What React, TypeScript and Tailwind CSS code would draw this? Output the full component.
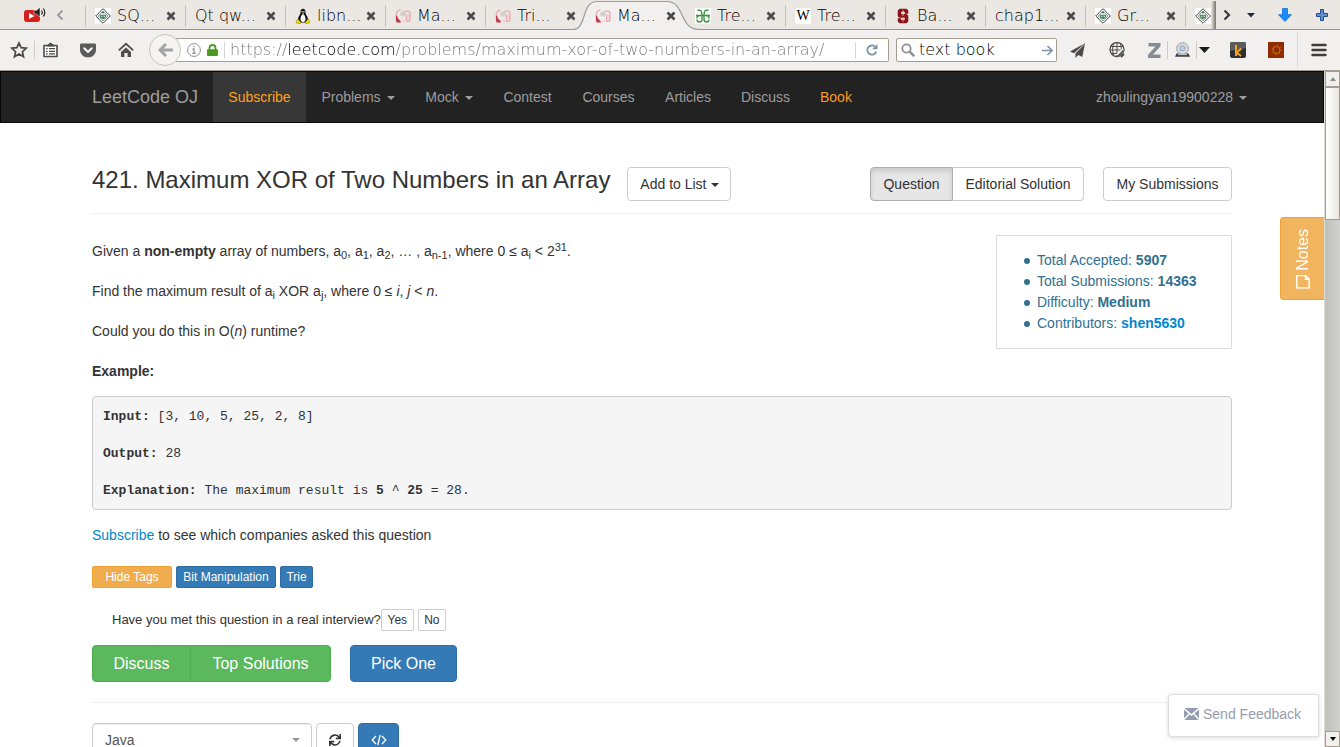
import type { ReactNode } from "react";

const caret = "ml-1 inline-block border-x-4 border-t-4 border-x-transparent border-t-current align-middle";
const navCaret = "ml-[6px] inline-block border-x-4 border-t-4 border-x-transparent border-t-current align-middle";

function CloseMark() {
  return (
    <svg width="10" height="10" viewBox="0 0 10 10" aria-hidden="true">
      <path d="M1.500 1.500l7 7M8.500 1.500l-7 7" stroke="#4a4a4a" strokeWidth="2.600" />
    </svg>
  );
}

function DiamondIcon() {
  return (
    <svg width="16" height="16" viewBox="0 0 16 16">
      <rect width="16" height="16" fill="#fff" />
      <path d="M8 .7L15.300 8 8 15.300.7 8z" fill="#fff" stroke="#3c4440" strokeWidth="1" />
      <path d="M8 3l5 5-5 5-5-5z" fill="#e6ede8" stroke="#8a968e" strokeWidth=".8" />
      <path d="M4.600 6.300l2 .6h2.800l2-.6-.5 3.200L8 11.600 5.100 9.500z" fill="#4d8a63" />
      <path d="M6.300 8.400h1M8.800 8.400h1" stroke="#fff" />
      <path d="M8 3.200v2.400M6.800 4.600h2.400" stroke="#3f5c4a" strokeWidth=".8" />
    </svg>
  );
}

function TuxIcon() {
  return (
    <svg width="16" height="16" viewBox="0 0 16 16">
      <path d="M8 .8c-1.700 0-2.600 1.300-2.500 3.200.1 1.500-.3 2.200-1.100 3.500C3.500 9 3 10.300 3 12l2 2.500h6l2-2.500c0-1.700-.5-3-1.400-4.500-.8-1.300-1.200-2-1.100-3.500C10.600 2.100 9.700.8 8 .8z" fill="#111" />
      <path d="M8 6.300c-1.300 0-2.500 2.600-2.500 5 0 1.500 1 2.700 2.500 2.700s2.500-1.200 2.500-2.700c0-2.400-1.200-5-2.500-5z" fill="#fff" />
      <path d="M6.500 3h1v1.300h-1zM8.500 3h1v1.300h-1z" fill="#fff" />
      <path d="M6.600 5L8 4.400 9.400 5 8 6z" fill="#f5b800" />
      <path d="M3 11l3 3.800-1 .9-4-.9.600-2.200zM13 11l-3 3.800 1 .9 4-.9-.6-2.200z" fill="#f7e000" stroke="#5a5000" strokeWidth=".4" />
    </svg>
  );
}

function LeetIcon() {
  return (
    <svg width="16" height="16" viewBox="0 0 16 16" fill="none">
      <path d="M1 7c1.600.5 1.200 2.500 2.200 3.800 1 1.200 2.600 1.800 2.800 3.700H1.500C.8 12 .7 9.500 1 7z" fill="#c4384d" />
      <path d="M1.200 7.500C1.200 4 2.800 2.300 5.500 1.800" stroke="#eab3ba" strokeWidth="1.600" />
      <path d="M5 5l2.500-1.800 3 .6.6 2.700-2 2-3.300-.3z" fill="#d3cfcb" />
      <path d="M9.500 3.200h3.800c1.300 0 1.700.8 1.700 2.200v6c0 1.300-.6 2-2 2h-1.500V6.800" stroke="#e8a8b1" strokeWidth="1.300" />
      <path d="M13.200 5.500v5.500M7 12.300l3 1.300" stroke="#efc6cb" />
    </svg>
  );
}

function GfgIcon() {
  return (
    <svg width="16" height="16" viewBox="0 0 16 16">
      <rect width="16" height="16" fill="#fff" />
      <g fill="none" stroke="#3d9440" strokeWidth="1.400">
        <path d="M2.300 2.200h2.200C6.500 2.200 7 4 7 7.500v3.800c0 1.800-1 2.700-2.500 2.700S2 13 2 11.500M1 7.500h14M4.500 7.500C3 7.500 2 9 2 10.500" />
        <path d="M13.700 2.200h-2.200C9.500 2.200 9 4 9 7.500v3.800c0 1.800 1 2.700 2.500 2.700S14 13 14 11.500M11.500 7.500c1.500 0 2.500 1.500 2.500 3" />
      </g>
    </svg>
  );
}

function WikiIcon() {
  return (
    <span className="grid size-4 place-items-center overflow-hidden rounded-xs bg-white font-['Liberation_Serif',serif] text-sm font-normal leading-4 text-black">
      W
    </span>
  );
}

function StanfordIcon() {
  return (
    <svg width="16" height="16" viewBox="0 0 16 16">
      <path d="M4.500.8h7L13.300 2.500v3.300H9.800V4H6.300v2h5.200l1.800 1.700v5.800l-1.800 1.700h-7l-1.800-1.700v-3.200h3.500V12h3.500V9.800H4.500L2.700 8.200V2.500z" fill="#8c1515" />
      <path d="M8 1.500l1.200 2.500H6.800zM8 5l1.400 2.600H6.600zM7.500 9h1v5h-1z" fill="#c98f8f" />
    </svg>
  );
}

type TabInfo = { title: string; icon?: ReactNode; active?: boolean; bare?: boolean };

const tabs: TabInfo[] = [
  { title: "SQ...", icon: <DiamondIcon /> },
  { title: "Qt qw..." },
  { title: "libn...", icon: <TuxIcon /> },
  { title: "Ma...", icon: <LeetIcon /> },
  { title: "Tri...", icon: <LeetIcon /> },
  { title: "Ma...", icon: <LeetIcon />, active: true },
  { title: "Tre...", icon: <GfgIcon />, bare: true },
  { title: "Tre...", icon: <WikiIcon /> },
  { title: "Ba...", icon: <StanfordIcon /> },
  { title: "chap1..." },
  { title: "Gr...", icon: <DiamondIcon /> },
];

function Tab({ title, icon, active, bare }: TabInfo) {
  return (
    <div className="relative flex h-[30px] w-[100px] shrink-0 items-center pt-[2px]">
      {active ? (
        <svg className="absolute -left-3 top-0" width="126" height="30" viewBox="0 0 126 30">
          <path d="M0 29.500C14 29.500 8 1.500 24 1.500H94C112 1.500 106 29.500 126 29.500V30H0z" fill="#f2f0ee" />
          <path d="M0 29.500C14 29.500 8 1.500 24 1.500H94C112 1.500 106 29.500 126 29.500" fill="none" stroke="#9a9c9e" strokeWidth="1.200" />
        </svg>
      ) : (
        <span className={bare ? "h-[22px] w-px" : "h-[22px] w-px bg-[#c5c1bb]"} />
      )}
      <button type="button" className={active ? "relative ml-[10px] flex min-w-0 flex-1 items-center gap-[6px]" : "relative ml-[9px] flex min-w-0 flex-1 items-center gap-[6px]"}>
        {icon}
        <span className="whitespace-nowrap">{title}</span>
      </button>
      <button type="button" aria-label="Close tab" className="relative mr-[9px]">
        <CloseMark />
      </button>
    </div>
  );
}

function TabStrip() {
  return (
    <div className="flex h-[30px] items-center bg-[linear-gradient(#ebe8e4_0_29px,#95938f_29px)] text-base">
      <button type="button" aria-label="Pinned video tab" className="ml-6 w-[22px]">
        <svg width="22" height="18" viewBox="0 0 22 18">
          <rect y="4" width="16" height="12" rx="3" fill="#d4201f" />
          <path d="M5 7l5.500 3L5 13z" fill="#fff" />
          <path d="M10 4.500h2.500L16 1.200v10L12.500 8H10z" fill="#222" stroke="#fff" strokeWidth=".5" />
          <path d="M17.500 4.500q1.500 2 0 4M19.300 2.500q3 4 0 8" fill="none" stroke="#222" strokeWidth="1.200" />
        </svg>
      </button>
      <button type="button" aria-label="Scroll tabs left" className="ml-[10px] mr-[21px]">
        <svg width="8" height="12" viewBox="0 0 8 12">
          <path d="M6.500 1.500L2 6l4.500 4.500" fill="none" stroke="#999" strokeWidth="1.800" />
        </svg>
      </button>
      <div className="flex min-w-0 flex-1 overflow-hidden">
        {tabs.map((t, i) => (
          <Tab key={i} {...t} />
        ))}
        <div className="flex h-[30px] shrink-0 items-center pt-[2px]">
          <span className="h-[22px] w-px bg-[#c5c1bb]" />
          <span className="ml-[9px]">
            <DiamondIcon />
          </span>
        </div>
      </div>
      <span className="h-[28px] w-[5px] bg-linear-to-r from-transparent to-[#77736d]" />
      <div className="flex w-[124px] items-center">
        <button type="button" aria-label="Scroll tabs right" className="ml-[7px]">
          <svg width="8" height="12" viewBox="0 0 8 12">
            <path d="M1.500 1.500L6 6l-4.500 4.500" fill="none" stroke="#3a3a3a" strokeWidth="2.200" />
          </svg>
        </button>
        <button type="button" aria-label="List all tabs" className="ml-[16px]">
          <svg width="8" height="5" viewBox="0 0 8 5">
            <path d="M0 0h8L4 4.500z" fill="#222b36" />
          </svg>
        </button>
        <button type="button" aria-label="Downloads" className="ml-[23px]">
          <svg width="14" height="14" viewBox="0 0 14 14">
            <path d="M4.500.5h5v6.200h4L7 13.500.5 6.700h4z" fill="#1a8cff" stroke="#1670d6" strokeWidth=".8" />
          </svg>
        </button>
        <button type="button" aria-label="New tab" className="ml-6">
          <svg width="12" height="12" viewBox="0 0 12 12">
            <path d="M4.500.5h3v4h4v3h-4v4h-3v-4h-4v-3h4z" fill="#6593cf" stroke="#1f4b8a" />
          </svg>
        </button>
      </div>
    </div>
  );
}

function Toolbar() {
  return (
    <div className="flex h-[41px] items-center border-b border-[#a59d90] bg-[#f2f0ee]">
      <button type="button" aria-label="Bookmark" className="ml-[10px]">
        <svg width="18" height="18" viewBox="0 0 18 18">
          <path d="M9 2l2.100 4.700 5.100.5-3.800 3.500 1.100 5L9 13.100l-4.500 2.600 1.100-5L1.800 7.200l5.100-.5z" fill="none" stroke="#4a4a4a" strokeWidth="1.700" />
        </svg>
      </button>
      <span className="ml-[6px] h-[18px] w-px bg-[#cfcbc5]" />
      <button type="button" aria-label="Bookmarks list" className="ml-[8px]">
        <svg width="15" height="16" viewBox="0 0 15 16">
          <path d="M1 3.500h13v11H1z" fill="#fff" stroke="#4a4a4a" strokeWidth="1.600" strokeLinejoin="round" />
          <path d="M3.500 4.500c0-2 1.500-1.500 2-2.500L7.500.5 9.500 2c.5 1 2 .5 2 2.500z" fill="#4a4a4a" />
          <path d="M3 6.700h1.600M3 9.300h1.600M3 11.900h1.600M6 6.700h6M6 9.300h6M6 11.900h6" stroke="#4a4a4a" strokeWidth="1.300" />
        </svg>
      </button>
      <button type="button" aria-label="Pocket" className="ml-[22px]">
        <svg width="16" height="15" viewBox="0 0 16 15">
          <path d="M1.500.5h13c.9 0 1.500.6 1.500 1.500v4.500c0 4.500-3.500 8-8 8s-8-3.500-8-8V2C0 1.100.6.500 1.500.500z" fill="#5a5a5a" />
          <path d="M4.200 5.200L8 8.800l3.800-3.600" fill="none" stroke="#fff" strokeWidth="2" strokeLinecap="round" />
        </svg>
      </button>
      <button type="button" aria-label="Home" className="ml-[22px]">
        <svg width="16" height="16" viewBox="0 0 16 16">
          <path d="M.8 8.300L8 1.800l7.200 6.500" fill="none" stroke="#4f4f4f" strokeWidth="1.800" />
          <path d="M3 10l5-4.500 5 4.500v5H9.600v-4H6.400v4H3z" fill="#4f4f4f" />
        </svg>
      </button>
      <button type="button" aria-label="Back" className="relative z-10 ml-[15px] grid size-8 place-items-center rounded-full border border-[#c9c4b8] bg-[#f5f4f1]">
        <svg width="15" height="14" viewBox="0 0 15 14">
          <path d="M8 1L2 7l6 6M2.500 7H15" fill="none" stroke="#a3a3a3" strokeWidth="3" />
        </svg>
      </button>
      <div className="-ml-[6px] flex h-6 min-w-0 flex-1 items-center rounded-xs border border-[#a59d90] bg-white pl-[11px]">
        <svg width="14" height="14" viewBox="0 0 14 14" fill="none" stroke="#8d8d8d">
          <circle cx="7" cy="7" r="6.400" />
          <path d="M5.500 6H7v4M5.300 10.300h3.500M6.200 3.700h1.300" strokeWidth="1.300" />
        </svg>
        <svg className="ml-[6px]" width="11" height="12" viewBox="0 0 11 12">
          <path d="M2.500 6V4a3 3 0 0 1 6 0v2" fill="none" stroke="#4a9a22" strokeWidth="1.800" />
          <rect y="5.200" width="11" height="6.800" rx="1" fill="#4a9a22" />
        </svg>
        <span className="ml-[6px] mr-[5px] h-4 w-px bg-[#d5d5d5]" />
        <input
          aria-label="Address"
          defaultValue="https://leetcode.com/problems/maximum-xor-of-two-numbers-in-an-array/"
          className="min-w-0 flex-1 bg-[linear-gradient(90deg,#777_57px,#000_57px_165px,#777_165px)] bg-clip-text text-base leading-5 text-transparent outline-none"
        />
        <span className="h-4 w-px bg-[#d5d5d5]" />
        <button type="button" aria-label="Reload" className="mx-[10px]">
          <svg width="12" height="12" viewBox="0 0 12 12">
            <path d="M10.300 7.600A4.600 4.600 0 1 1 9 2.600" fill="none" stroke="#7f93a8" strokeWidth="1.800" />
            <path d="M11.500 0v5.300H6.200z" fill="#7f93a8" />
          </svg>
        </button>
      </div>
      <div className="ml-[7px] flex h-6 w-[161px] items-center rounded-xs border border-[#a59d90] bg-white pl-1 pr-[3px]">
        <svg width="14" height="14" viewBox="0 0 14 14" fill="none" stroke="#8f8f8f">
          <circle cx="5.500" cy="5.500" r="4.200" strokeWidth="1.800" />
          <path d="M8.700 8.700l4.500 4.500" strokeWidth="2.500" />
        </svg>
        <input aria-label="Search" defaultValue="text book" className="ml-1 w-full min-w-0 flex-1 text-base leading-5 text-black outline-none" />
        <svg width="11" height="11" viewBox="0 0 11 11" fill="none" stroke="#7f93a8" strokeWidth="1.600">
          <path d="M0 5.500h10M5.500 1L10 5.500 5.500 10" />
        </svg>
      </div>
      <div className="flex h-full w-[283px] items-center">
        <button type="button" aria-label="Share" className="ml-[13px]">
          <svg width="15" height="15" viewBox="0 0 15 15">
            <path d="M15 .3L0 8.500l4 1.700zM15 .3L5.500 10.500V15l2.800-3 4 2z" fill="#4a4a4a" />
            <path d="M14 1.500L4.800 10.300" stroke="#c8c8c8" strokeWidth=".8" />
          </svg>
        </button>
        <button type="button" aria-label="Web tools" className="ml-6">
          <svg width="16" height="16" viewBox="0 0 16 16" fill="none" stroke="#4d4d4d">
            <circle cx="8" cy="7.500" r="7" strokeWidth="1.300" />
            <path d="M2 4.500h12M1 8h14M2 11.500h9M8 .5v14M4.500 1.500q-2 6 0 12M11.500 1.500q2 6 0 10" strokeWidth="1" />
            <path d="M14.500 7.500L8 14" stroke="#f2f0ee" strokeWidth="3.500" />
            <path d="M15 8l-5.500 5.800-2 .7M12 15l3-3" strokeWidth="1.800" />
          </svg>
        </button>
        <button type="button" aria-label="Zotero" className="ml-[23px]">
          <svg width="13" height="15" viewBox="0 0 13 15">
            <path d="M.5 0h12v3.300L5 11.500h7.500V15H0v-3.300l7.500-8.200h-7z" fill="#868c93" />
          </svg>
        </button>
        <span className="ml-[6px] h-[18px] w-px bg-[#cfcbc5]" />
        <button type="button" aria-label="Capture" className="ml-[7px]">
          <svg width="15" height="16" viewBox="0 0 15 16">
            <path d="M0 14.800L1.500 11.500h12l1.500 3.300z" fill="#3f3f3f" />
            <circle cx="7.500" cy="6.500" r="5.800" fill="#dcdcdc" stroke="#9c9c9c" />
            <circle cx="7.500" cy="6.300" r="2.500" fill="#b9d4f5" stroke="#8ba3c5" />
            <path d="M3 12.600h9" stroke="#ccc" />
          </svg>
        </button>
        <span className="ml-[6px] h-[18px] w-px bg-[#cfcbc5]" />
        <button type="button" aria-label="Capture options" className="ml-[2px]">
          <svg width="11" height="6" viewBox="0 0 11 6">
            <path d="M0 0h11L5.500 6z" fill="#1a1a1a" />
          </svg>
        </button>
        <button type="button" aria-label="Shortcut" className="ml-5">
          <svg width="16" height="16" viewBox="0 0 16 16">
            <rect width="16" height="16" rx="2" fill="#2e2e2e" />
            <path d="M0 2q0-2 2-2h12q2 0 2 2v4L0 9z" fill="#5c5c5c" />
            <path d="M6 3v11M11.500 6.500L6.500 10.500l4.500 3.500" fill="none" stroke="#f5a316" strokeWidth="2" />
          </svg>
        </button>
        <button type="button" aria-label="Extension" className="ml-[22px]">
          <svg width="16" height="16" viewBox="0 0 16 16">
            <rect width="16" height="16" fill="#8f2c00" />
            <circle cx="8.500" cy="8" r="3.500" fill="none" stroke="#c9761a" strokeWidth="1" />
            <circle cx="8.500" cy="8" r="4.500" fill="none" stroke="#c9761a" strokeWidth="1" strokeDasharray="1.200 2.300" />
          </svg>
        </button>
        <span className="ml-[13px] h-9 w-px bg-[#dcd8d2]" />
        <button type="button" aria-label="Menu" className="ml-[13px]">
          <svg width="16" height="14" viewBox="0 0 16 14">
            <path d="M1.500 2h13M1.500 7h13M1.500 12h13" stroke="#3e3e3e" strokeWidth="2.400" strokeLinecap="round" />
          </svg>
        </button>
      </div>
    </div>
  );
}

const links = [
  { text: "Problems", menu: true, width: "w-[104px]" },
  { text: "Mock", menu: true, width: "w-[78px]" },
  { text: "Contest", width: "w-[79px]" },
  { text: "Courses", width: "w-[83px]" },
  { text: "Articles", width: "w-[76px]" },
  { text: "Discuss", width: "w-[79px]" },
];

function SiteNav() {
  return (
    <nav className="border border-[#080808] bg-[#222] text-sm leading-5 text-[#9d9d9d]">
      <div className="mx-auto flex max-w-[1170px] items-center pl-[15px]">
        <a href="#home" className="mr-[15px] w-[106px] whitespace-nowrap text-lg leading-5">LeetCode OJ</a>
        <a href="#subscribe" className="w-[93px] bg-[#373737] py-[15px] text-center text-[#ffa116]">Subscribe</a>
        {links.map((l) => (
          <a key={l.text} href={"#" + l.text.toLowerCase()} className={"whitespace-nowrap py-[15px] text-center " + l.width}>
            {l.text}
            {l.menu && <span className={navCaret} />}
          </a>
        ))}
        <a href="#book" className="px-[15px] py-[15px] text-[#f89c1c]">Book</a>
        <a href="#account" className="ml-auto py-[15px]">
          zhoulingyan19900228
          <span className={navCaret} />
        </a>
      </div>
    </nav>
  );
}

const outline = "border border-[#ccc] bg-white text-[#333] whitespace-nowrap";
const bullet = "flex items-center gap-[7px] before:size-[6px] before:rounded-full before:bg-[#31708f]";

function Problem() {
  return (
    <main className="mx-auto max-w-[1170px] px-[15px] pt-11 text-sm leading-5 text-[#333]">
      <div className="flex items-start border-b border-[#eee] pb-3">
        <h1 className="text-2xl leading-[26px]">421. Maximum XOR of Two Numbers in an Array</h1>
        <button type="button" className={"ml-[17px] h-[34px] w-[104px] rounded-sm " + outline}>
          Add to List
          <span className={caret} />
        </button>
        <div className="ml-auto flex">
          <button type="button" className="h-[34px] w-[83px] rounded-l-sm border border-[#adadad] bg-[#e6e6e6] shadow-[inset_0_3px_5px_rgba(0,0,0,0.125)]">Question</button>
          <button type="button" className={"-ml-px h-[34px] w-[132px] rounded-r-sm border-l-[#adadad] " + outline}>Editorial Solution</button>
        </div>
        <button type="button" className={"ml-[19px] h-[34px] w-[129px] rounded-sm " + outline}>My Submissions</button>
      </div>

      <div className="mt-[21px] flex items-start justify-between">
        <div className="flex flex-col gap-5 pt-[6px] [&_sub]:text-[11px] [&_sup]:text-[11px]">
          <p>
            Given a <b>non-empty</b> array of numbers, a<sub>0</sub>, a<sub>1</sub>, a<sub>2</sub>, … , a<sub>n-1</sub>, where 0 ≤ a<sub>i</sub> &lt; 2<sup>31</sup>.
          </p>
          <p>
            Find the maximum result of a<sub>i</sub> XOR a<sub>j</sub>, where 0 ≤ <i>i</i>, <i>j</i> &lt; <i>n</i>.
          </p>
          <p>
            Could you do this in O(<i>n</i>) runtime?
          </p>
          <p>
            <b>Example:</b>
          </p>
        </div>
        <ul className="h-[114px] w-[236px] border border-[#ddd] pl-[27px] pt-[14px] leading-[21px] text-[#31708f]">
          <li className={bullet}><span>Total Accepted: <b>5907</b></span></li>
          <li className={bullet}><span>Total Submissions: <b>14363</b></span></li>
          <li className={bullet}><span>Difficulty: <b>Medium</b></span></li>
          <li className={bullet}><span>Contributors: <a href="#shen5630" className="font-bold text-[#0088cc]">shen5630</a></span></li>
        </ul>
      </div>

      <pre className="mt-[15px] rounded-sm border border-[#ccc] bg-[#f5f5f5] px-[10px] pt-px font-['Liberation_Mono',monospace] text-[13px] leading-[37px]">
        <b>Input:</b>{" [3, 10, 5, 25, 2, 8]\n"}
        <b>Output:</b>{" 28\n"}
        <b>Explanation:</b>{" The maximum result is "}<b>5</b>{" ^ "}<b>25</b>{" = 28."}
      </pre>

      <p className="mt-[15px]">
        <a href="#subscribe" className="text-[#0088cc]">Subscribe</a> to see which companies asked this question
      </p>

      <div className="mt-[21px] flex gap-1 text-xs text-white">
        <button type="button" className="h-[22px] w-20 rounded-xs border border-[#eea236] bg-[#f0ad4e]">Hide Tags</button>
        <a href="#bit-manipulation" className="flex h-[22px] w-[100px] items-center justify-center rounded-xs border border-[#2e6da4] bg-[#337ab7]">Bit Manipulation</a>
        <a href="#trie" className="flex h-[22px] w-[33px] items-center justify-center rounded-xs border border-[#2e6da4] bg-[#337ab7]">Trie</a>
      </div>

      <div className="mt-[21px] flex items-center pl-5 text-xs">
        <span className="text-[13px]">Have you met this question in a real interview?</span>
        <div className="flex gap-1">
          <button type="button" className={"h-[22px] w-[33px] rounded-xs " + outline}>Yes</button>
          <button type="button" className={"h-[22px] w-[28px] rounded-xs " + outline}>No</button>
        </div>
      </div>

      <div className="mt-[14px] flex border-b border-[#eee] pb-5 text-center text-base text-white">
        <a href="#discuss" className="w-[99px] rounded-l-sm border border-[#4cae4c] bg-[#5cb85c] py-2 leading-[19px]">Discuss</a>
        <a href="#solutions" className="-ml-px w-[141px] rounded-r-sm border border-[#4cae4c] bg-[#5cb85c] py-2 leading-[19px]">Top Solutions</a>
        <a href="#pick" className="ml-[19px] w-[107px] rounded-sm border border-[#2e6da4] bg-[#337ab7] py-2 leading-[19px]">Pick One</a>
      </div>

      <div className="mt-5 flex gap-1">
        <div className="relative">
          <select aria-label="Language" className="h-[34px] w-[220px] appearance-none rounded-sm border border-[#ccc] bg-white pl-3 text-[#555] shadow-[inset_0_1px_1px_rgba(0,0,0,0.075)]">
            <option>Java</option>
          </select>
          <span className="pointer-events-none absolute right-3 top-[15px] border-x-4 border-t-4 border-x-transparent border-t-[#999]" />
        </div>
        <button type="button" aria-label="Reset code" className={"grid h-[34px] w-[38px] place-items-center rounded-sm " + outline}>
          <svg width="12" height="12" viewBox="0 0 512 512" fill="#333">
            <path d="M440.600 12.600l4 82.800A247.200 247.200 0 0 0 255.800 8C134.700 8 33.900 94.900 12.300 209.800A12 12 0 0 0 24.100 224h49a12 12 0 0 0 11.700-9.300 175.900 175.900 0 0 1 317-56.900l-101.500-4.900a12 12 0 0 0-12.600 12v47.400a12 12 0 0 0 12 12H500a12 12 0 0 0 12-12V12a12 12 0 0 0-12-12h-47.400a12 12 0 0 0-12 12.600zM255.800 432a175.600 175.600 0 0 1-146-77.800l101.800 4.900a12 12 0 0 0 12.600-12v-47.400a12 12 0 0 0-12-12H12a12 12 0 0 0-12 12V500a12 12 0 0 0 12 12h47.400a12 12 0 0 0 12-12.600l-4.200-82.600A247.200 247.200 0 0 0 255.800 504c121.100 0 221.900-86.900 243.600-201.800a12 12 0 0 0-11.800-14.200h-49a12 12 0 0 0-11.700 9.300A175.900 175.900 0 0 1 255.800 432z" />
          </svg>
        </button>
        <button type="button" aria-label="Code view" className="grid h-[34px] w-[41px] place-items-center rounded-sm border border-[#2e6da4] bg-[#337ab7]">
          <svg width="16" height="12" viewBox="0 0 16 12" fill="none" stroke="#fff" strokeWidth="1.300">
            <path d="M5 2L1.200 6 5 10M11 2l3.800 4L11 10M9.200 1L6.800 11" />
          </svg>
        </button>
      </div>
    </main>
  );
}

function Scrollbar() {
  return (
    <div aria-hidden="true" className="flex w-4 shrink-0 flex-col border-l border-[#dedcd8] bg-linear-to-r from-[#c0c1bb] to-[#d0d0cd]">
      <span className="grid h-4 place-items-center border border-[#a59d90] bg-[#f2f0ed]">
        <span className="border-x-[3px] border-b-4 border-x-transparent border-b-[#8c8c88]" />
      </span>
      <span className="h-[133px] border border-[#a59d90] bg-linear-to-r from-white to-[#e9e6e1]" />
      <span className="mt-auto grid h-4 place-items-center border border-[#a59d90] bg-[#f2f0ed]">
        <span className="border-x-[3px] border-t-4 border-x-transparent border-t-black" />
      </span>
    </div>
  );
}

export default function App() {
  return (
    <div className="flex h-screen flex-col overflow-hidden bg-white font-['Liberation_Sans',Arial,sans-serif]">
      <header className="font-['DejaVu_Sans',sans-serif] font-extralight text-black">
        <TabStrip />
        <Toolbar />
      </header>
      <div className="flex min-h-0 flex-1">
        <div className="relative min-w-0 flex-1 overflow-hidden">
          <SiteNav />
          <Problem />
          <button type="button" className="absolute right-0 top-[146px] flex h-[83px] w-11 items-center justify-center rounded-l-sm border border-r-0 border-[#eea236] bg-[#f1b560] text-base text-white">
            <span className="flex rotate-180 items-center gap-1 [writing-mode:vertical-rl]">
              <svg width="14" height="14" viewBox="0 0 14 14" fill="none" stroke="#fff" strokeWidth="1.400" className="rotate-180">
                <path d="M.8.8h9l3.400 3.400v9H.8zM9.500.8v3.700h3.700" />
              </svg>
              Notes
            </span>
          </button>
          <button type="button" className="absolute bottom-[10px] right-[5px] flex h-[43px] w-[151px] items-center gap-1 rounded-l-sm border border-[#ddd] bg-white pb-[3px] pl-[15px] text-sm text-[#959daf] shadow-[0_1px_4px_rgba(0,0,0,0.15)]">
            <svg width="15" height="12" viewBox="0 0 15 12">
              <rect width="15" height="12" fill="#959daf" />
              <path d="M0 .5l7.500 6.500L15 .5M0 11.500l5-5.500M15 11.500L10 6" fill="none" stroke="#fff" strokeWidth="1.500" />
            </svg>
            Send Feedback
          </button>
        </div>
        <Scrollbar />
      </div>
    </div>
  );
}
